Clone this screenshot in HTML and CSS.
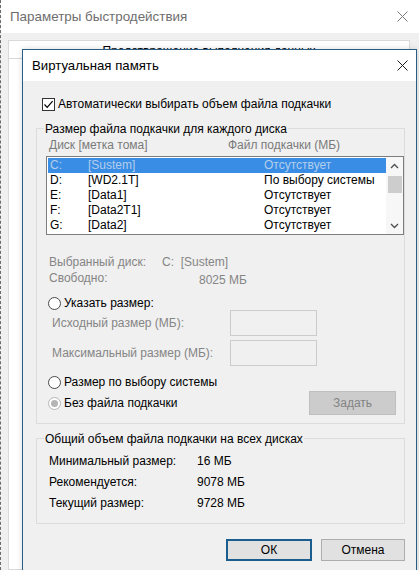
FILE: index.html
```html
<!DOCTYPE html>
<html lang="ru">
<head>
<meta charset="utf-8">
<title>Виртуальная память</title>
<link rel="stylesheet" href="styles.css">
</head>
<body>
<div class="parent">
  <div class="ptitle">
    <span>Параметры быстродействия</span>
    <svg class="xicon" width="11" height="11" viewBox="0 0 11 11"><path d="M0.5 0.5 L10.5 10.5 M10.5 0.5 L0.5 10.5" stroke="#7a7a7a" stroke-width="1" fill="none"/></svg>
  </div>
  <div class="pbody">
    <div class="tab">Предотвращение выполнения данных</div>
    <div class="tabpage"></div>
  </div>
</div>

<div class="dialog">
  <div class="dtitle">
    <span>Виртуальная память</span>
    <svg class="xicon" width="11" height="11" viewBox="0 0 11 11"><path d="M0.5 0.5 L10.5 10.5 M10.5 0.5 L0.5 10.5" stroke="#1a1a1a" stroke-width="1" fill="none"/></svg>
  </div>
  <div class="dbody">
    <div class="check-row">
      <span class="cb"><svg width="11" height="11" viewBox="0 0 11 11"><path d="M1.5 5.5 L4.2 8.3 L9.6 2.2" stroke="#000" stroke-width="1.2" fill="none"/></svg></span>
      <span>Автоматически выбирать объем файла подкачки</span>
    </div>

    <div class="group g1">
      <div class="glabel">Размер файла подкачки для каждого диска</div>
      <div class="cols"><span class="c1">Диск [метка тома]</span><span>Файл подкачки (МБ)</span></div>
      <div class="list">
        <div class="rows">
          <div class="row sel"><span>C:</span><span>[Sustem]</span><span>Отсутствует</span></div>
          <div class="row"><span>D:</span><span>[WD2.1T]</span><span>По выбору системы</span></div>
          <div class="row"><span>E:</span><span>[Data1]</span><span>Отсутствует</span></div>
          <div class="row"><span>F:</span><span>[Data2T1]</span><span>Отсутствует</span></div>
          <div class="row"><span>G:</span><span>[Data2]</span><span>Отсутствует</span></div>
        </div>
        <div class="sb">
          <div class="sb-btn"><svg width="9" height="6" viewBox="0 0 9 6"><path d="M1 5 L4.5 1.5 L8 5" stroke="#505050" stroke-width="1.4" fill="none"/></svg></div>
          <div class="sb-track"><div class="thumb"></div></div>
          <div class="sb-btn"><svg width="9" height="6" viewBox="0 0 9 6"><path d="M1 1 L4.5 4.5 L8 1" stroke="#505050" stroke-width="1.4" fill="none"/></svg></div>
        </div>
      </div>

      <div class="info first"><span class="il1">Выбранный диск:</span><span>C:&nbsp;&nbsp;[Sustem]</span></div>
      <div class="info"><span class="il2">Свободно:</span><span class="free">8025 МБ</span></div>

      <div class="radio-row r1"><span class="radio"></span><span>Указать размер:</span></div>
      <div class="field"><span class="flabel">Исходный размер (МБ):</span><span class="input"></span></div>
      <div class="field f2"><span class="flabel">Максимальный размер (МБ):</span><span class="input"></span></div>
      <div class="radio-row r2"><span class="radio"></span><span>Размер по выбору системы</span></div>
      <div class="last-row">
        <div class="radio-row"><span class="radio on"><span class="dot"></span></span><span>Без файла подкачки</span></div>
        <div class="btn-disabled">Задать</div>
      </div>
    </div>

    <div class="group g2">
      <div class="glabel">Общий объем файла подкачки на всех дисках</div>
      <div class="totals">
        <div class="trow"><span class="tl">Минимальный размер:</span><span>16 МБ</span></div>
        <div class="trow"><span class="tl">Рекомендуется:</span><span>9078 МБ</span></div>
        <div class="trow"><span class="tl">Текущий размер:</span><span>9728 МБ</span></div>
      </div>
    </div>

    <div class="buttons">
      <div class="btn ok">ОК</div>
      <div class="btn cancel">Отмена</div>
    </div>
  </div>
</div>
</body>
</html>
```
FILE: styles.css
```css
* { box-sizing: border-box; }
html, body { margin: 0; padding: 0; }
body {
  width: 419px;
  height: 570px;
  overflow: hidden;
  font-family: "Liberation Sans", Arial, sans-serif;
  font-size: 12px;
  color: #000;
  background: #f0f0f0;
}

/* parent window */
.parent {
  height: 570px;
  border-left: 1px dashed #6a6a6a;
  background: #f0f0f0;
  display: flex;
  flex-direction: column;
}
.ptitle {
  height: 33px;
  flex: none;
  background: #fff;
  display: flex;
  align-items: center;
  justify-content: space-between;
  padding: 0 11px 0 9px;
  color: #6e6e6e;
  font-size: 13.4px;
}
.pbody {
  flex: 1;
  padding: 7px 9px 0 7px;
  display: flex;
  flex-direction: column;
}
.tab {
  height: 18px;
  border: 1px solid #d9d9d9;
  border-bottom: none;
  background: #fff;
  text-align: center;
  line-height: 14px;
  padding-top: 3px;
  color: #000;
}
.tabpage {
  flex: 1;
  border: 1px solid #d9d9d9;
  background: #fff;
}

/* dialog */
.dialog {
  position: absolute;
  left: 22px;
  top: 49px;
  width: 395px;
  height: 540px;
  border: 1px solid #2b5e84;
  background: #f0f0f0;
  box-shadow: 0 0 6px rgba(0,0,0,0.15);
}
.dtitle {
  height: 31px;
  background: #fff;
  display: flex;
  align-items: center;
  justify-content: space-between;
  padding: 0 8px 0 9px;
  font-size: 13.2px;
}
.dbody {
  padding: 13px 11px 0 13px;
}
.check-row {
  height: 20px;
  display: flex;
  align-items: center;
  gap: 3px;
  padding-left: 6px;
}
.cb {
  width: 13px;
  height: 13px;
  border: 1px solid #333;
  background: #fff;
  display: flex;
  align-items: center;
  justify-content: center;
}

.group {
  margin-top: 14px;
  border: 1px solid #dcdcdc;
}
.g1 { padding-bottom: 8px; }
.g2 { padding-bottom: 9px; }
.glabel {
  margin-top: -8px;
  margin-left: 7px;
  padding: 0 1px;
  height: 16px;
  line-height: 16px;
  width: fit-content;
  background: #f0f0f0;
}
.cols {
  height: 16px;
  line-height: 16px;
  padding-left: 12px;
  display: flex;
  color: #7a7a7a;
}
.c1 { width: 179px; }

.list {
  margin: 3px 0 0 9px;
  height: 79px;
  border: 1px solid #7d7d7d;
  background: #fff;
  display: grid;
  grid-template-columns: 1fr 17px;
}
.rows { padding: 1px 0 0 1px; }
.row {
  height: 15px;
  line-height: 15px;
  display: grid;
  grid-template-columns: 38px 176px 1fr;
  padding-left: 2px;
  white-space: nowrap;
}
.row.sel {
  background: #3a8de4;
  color: #b3cdec;
}
.sb {
  background: #f7f7f7;
  display: flex;
  flex-direction: column;
}
.sb-btn {
  height: 17px;
  display: flex;
  align-items: center;
  justify-content: center;
}
.sb-track { flex: 1; padding-top: 2px; }
.thumb {
  height: 17px;
  margin: 0 1px 0 2px;
  background: #cdcdcd;
}

.info {
  height: 16px;
  line-height: 16px;
  padding-left: 12px;
  display: flex;
  color: #858585;
}
.info.first { margin-top: 19px; }
.il1 { width: 113px; }
.il2 { width: 150px; }
.free { padding-top: 2px; }

.radio-row {
  height: 14px;
  display: flex;
  align-items: center;
  gap: 3px;
  padding-left: 11px;
}
.r1 { margin-top: 10px; }
.r2 { margin-top: 9px; }
.radio {
  width: 13px;
  height: 13px;
  border-radius: 50%;
  border: 1px solid #4a4a4a;
  background: #fff;
  display: flex;
  align-items: center;
  justify-content: center;
}
.radio.on { border-color: #b5b5b5; }
.dot {
  width: 7px;
  height: 7px;
  border-radius: 50%;
  background: #b5b5b5;
}
.field {
  height: 26px;
  display: flex;
  align-items: center;
  padding-left: 15px;
  color: #858585;
}
.f2 { margin-top: 4px; }
.flabel { width: 178px; }
.input {
  width: 87px;
  height: 26px;
  border: 1px solid #cccccc;
  background: #f0f0f0;
}
.last-row {
  margin-top: 2px;
  height: 24px;
  display: flex;
  align-items: center;
}
.btn-disabled {
  margin-left: auto;
  margin-right: 8px;
  width: 87px;
  height: 24px;
  line-height: 22px;
  text-align: center;
  background: #cccccc;
  border: 1px solid #bfbfbf;
  color: #838383;
}

.totals { margin-top: 4px; }
.trow {
  height: 21px;
  line-height: 21px;
  display: flex;
  padding-left: 12px;
}
.tl { width: 148px; }

.buttons {
  margin-top: 15px;
  display: flex;
  justify-content: flex-end;
  gap: 9px;
}
.btn {
  height: 22px;
  background: #e1e1e1;
  text-align: center;
  display: flex;
  align-items: center;
  justify-content: center;
}
.ok { width: 86px; border: 2px solid #1c5d8f; }
.cancel { width: 84px; border: 1px solid #adadad; }
```
